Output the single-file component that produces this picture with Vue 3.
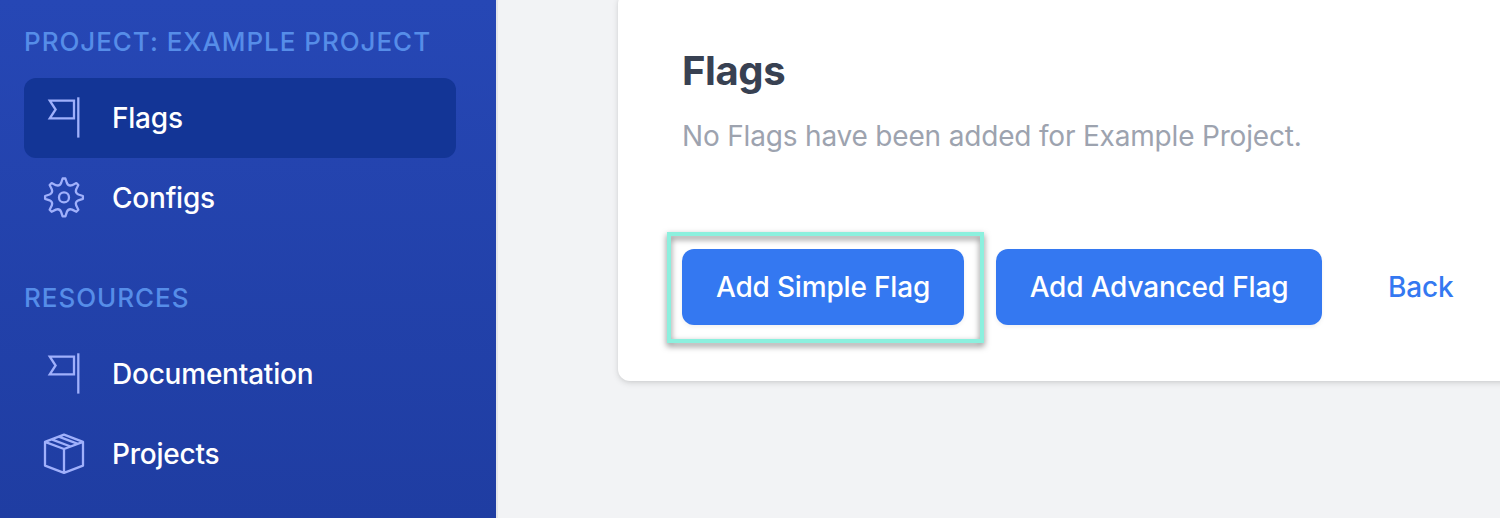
<script setup>
const sections = [
  {
    title: 'Project: Example Project',
    key: 'project',
    items: [
      { label: 'Flags', icon: 'flag', active: true },
      { label: 'Configs', icon: 'gear' },
    ],
  },
  {
    title: 'Resources',
    key: 'resources',
    items: [
      { label: 'Documentation', icon: 'flag' },
      { label: 'Projects', icon: 'box' },
    ],
  },
]

// Outline of an eight-toothed gear centred in a 40x40 box.
function gearOutline() {
  const at = (turn, x, y) => {
    const a = (turn * Math.PI) / 4
    const px = 20 + x * Math.cos(a) - y * Math.sin(a)
    const py = 20.4 + x * Math.sin(a) + y * Math.cos(a)
    return `${px.toFixed(2)} ${py.toFixed(2)}`
  }
  let d = `M${at(0, -1.4, -18.9)}`
  for (let i = 0; i < 8; i++) {
    d += `L${at(i, 1.4, -18.9)}L${at(i, 2.9, -14.4)}`
    d += `Q${at(i, 4.5, -10.9)} ${at(i + 1, -2.9, -14.4)}`
    d += `L${at(i + 1, -1.4, -18.9)}`
  }
  return d + 'Z'
}
const gear = gearOutline()
</script>

<template>
  <div class="page">
    <aside class="sidebar">
      <nav v-for="s in sections" :key="s.key" class="section">
        <h2 class="section-title">{{ s.title }}</h2>
        <a v-for="i in s.items" :key="i.label" class="item" :class="{ active: i.active }">
          <svg class="icon" viewBox="0 0 40 40">
            <template v-if="i.icon === 'flag'">
              <path d="M5.8 3.6H30V21.4H5.8L11.6 12.5Z" />
              <path d="M34.3 0.3V40.6" />
            </template>
            <template v-else-if="i.icon === 'gear'">
              <path :d="gear" stroke-linejoin="round" />
              <circle cx="20" cy="20.4" r="5" />
            </template>
            <template v-else>
              <path d="M20 1.6L39 8.8V32.6L20 39.8L1 32.6V8.8ZM1 8.8L20 16L39 8.8M20 16V39.8M7.6 6.3L26.6 13.5M14.8 3.6L33.8 10.8" stroke-linejoin="round" />
            </template>
          </svg>
          <span class="label">{{ i.label }}</span>
        </a>
      </nav>
    </aside>
    <main class="content">
      <section class="card">
        <h1 class="title">Flags</h1>
        <p class="empty">No Flags have been added for Example Project.</p>
        <div class="actions">
          <button class="btn simple">Add Simple Flag<i class="highlight"></i></button>
          <button class="btn advanced">Add Advanced Flag</button>
          <a class="back">Back</a>
        </div>
      </section>
    </main>
  </div>
</template>

<style>
body {
  overflow: hidden;
}
</style>

<style scoped>
.page {
  display: flex;
  height: 518px;
  overflow: hidden;
  background: #f2f3f5;
  font-family: Inter, sans-serif;
  font-size: 28px;
  letter-spacing: -0.18px;
}
.sidebar {
  box-sizing: border-box;
  flex: none;
  width: 496px;
  padding: 22px 40px 0 24px;
  background: linear-gradient(#2647b5, #1f3da2);
}
.section + .section {
  margin-top: 40px;
}
.section-title {
  margin: 0 0 16px;
  font-size: 26px;
  line-height: 40px;
  font-weight: 450;
  letter-spacing: 0.95px;
  text-transform: uppercase;
  white-space: nowrap;
  color: #568de8;
}
.item {
  display: flex;
  align-items: center;
  box-sizing: border-box;
  height: 80px;
  padding-left: 20px;
  border-radius: 12px;
  color: #fff;
  font-weight: 500;
  letter-spacing: -0.22px;
}
.item.active {
  background: #133596;
}
.icon {
  flex: none;
  width: 40px;
  height: 40px;
  margin: 0 28px 2px 0;
  overflow: visible;
  fill: none;
  stroke: #a0b0fb;
  stroke-width: 2.3;
}
.label {
  white-space: nowrap;
}
.content {
  flex: 1;
  min-width: 0;
  padding-left: 120px;
  border-left: 2px solid #e3e5e9;
}
.card {
  box-sizing: border-box;
  width: 1000px;
  height: 389px;
  margin-top: -8px;
  padding: 54px 64px 0;
  border-radius: 12px;
  background: #fff;
  box-shadow: 0 2px 6px rgba(0, 0, 0, 0.13), 0 1px 3px rgba(0, 0, 0, 0.04);
}
.title {
  margin: 0;
  font-size: 40px;
  line-height: 50px;
  font-weight: 700;
  letter-spacing: -0.4px;
  color: #384152;
}
.empty {
  margin: 20px 0 0;
  line-height: 40px;
  color: #9da3af;
  white-space: nowrap;
}
.actions {
  display: flex;
  align-items: center;
  margin-top: 93px;
}
.btn {
  box-sizing: border-box;
  position: relative;
  height: 76px;
  padding: 0;
  border: 0;
  border-radius: 12px;
  background: #3478f1;
  color: #fff;
  font: 500 28px/40px Inter, sans-serif;
  letter-spacing: -0.18px;
  white-space: nowrap;
  box-shadow: 0 2px 4px rgba(0, 0, 0, 0.06);
}
.simple {
  width: 282px;
}
.advanced {
  width: 326px;
  margin-left: 32px;
}
.highlight {
  position: absolute;
  inset: -17px -20px -18px -15px;
  border: 4px solid #8cf0de;
  filter: drop-shadow(0 3px 3px rgba(0, 0, 0, 0.5));
}
.back {
  margin-left: 66px;
  color: #3478f1;
  font-weight: 500;
}
</style>
